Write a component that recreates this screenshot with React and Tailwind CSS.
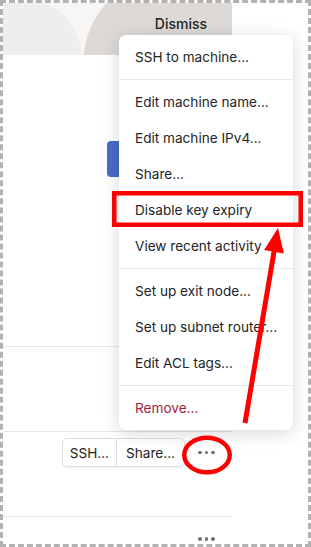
import React from "react";

function Dots() {
  return (
    <div className="flex items-center gap-[3px]">
      <span className="block w-[3.5px] h-[3.5px] rounded-full bg-[#727272]" />
      <span className="block w-[3.5px] h-[3.5px] rounded-full bg-[#727272]" />
      <span className="block w-[3.5px] h-[3.5px] rounded-full bg-[#727272]" />
    </div>
  );
}

const items = [
  ["SSH to machine..."],
  ["Edit machine name...", "Edit machine IPv4...", "Share...", "Disable key expiry", "View recent activity"],
  ["Set up exit node...", "Set up subnet router...", "Edit ACL tags..."],
];

export default function App() {
  return (
    <div
      className="relative w-[311px] h-[547px] overflow-hidden bg-white border-[3px] border-dashed border-[#b2b2b2] text-[#222]"
      style={{ fontFamily: "Inter, 'Noto Sans', sans-serif" }}
    >
      <div className="w-[229px] flex flex-col">
        {/* banner */}
        <div className="relative h-[52px] bg-[#f7f6f5] overflow-hidden flex justify-end items-start">
          <svg className="absolute inset-0" width="229" height="52" viewBox="0 0 229 52">
            <circle cx="17" cy="57" r="62" fill="#efeeec" />
            <circle cx="167" cy="59" r="86.5" fill="#dcd9d7" />
            <rect x="150" y="0" width="79" height="52" fill="#dcd9d7" />
          </svg>
          <span className="relative mt-[12px] mr-[25px] text-[14px] leading-[18px] font-medium text-[#242424]">
            Dismiss
          </span>
        </div>
        {/* section 1 */}
        <div className="h-[292px] border-b border-[#e6e6e6] pt-[86px] pl-[104px]">
          <div className="w-[70px] h-[36px] rounded-[4px] bg-[#4a6bcc]" />
        </div>
        {/* section 2 */}
        <div className="h-[85px] border-b border-[#e6e6e6]" />
        {/* section 3 */}
        <div className="h-[85px] border-b border-[#e6e6e6] flex justify-end items-start pt-[6px] pr-[4px]">
          <div className="flex items-stretch h-[29px]">
            <div className="flex border border-[#dedede] rounded-[5px] shadow-[0_1px_2px_rgba(0,0,0,0.06)] bg-white">
              <button className="px-[7px] text-[13.6px] leading-[18px] text-[#232323] border-r border-[#dedede]">SSH...</button>
              <button className="px-[9px] text-[13.6px] leading-[18px] text-[#232323]">Share...</button>
            </div>
            <div className="w-[43px] flex items-center justify-center">
              <Dots />
            </div>
          </div>
        </div>
        {/* section 4 */}
        <div className="flex justify-end pr-[4px] pt-[20px]">
          <div className="w-[43px] flex items-center justify-center">
            <Dots />
          </div>
        </div>
      </div>

      {/* dropdown menu */}
      <div className="absolute left-[116px] top-[32px] w-[174px] bg-white rounded-[7px] shadow-[0_3px_18px_rgba(0,0,0,0.16)] text-[13.6px] text-[#242424]">
        {items.map((group, gi) => (
          <div key={gi} className={"py-1" + (gi > 0 ? " border-t border-[#e8e8e8]" : "")}>
            {group.map((t) => (
              <div key={t} className="h-9 px-4 flex items-center whitespace-nowrap">
                {t}
              </div>
            ))}
          </div>
        ))}
        <div className="py-1 border-t border-[#e8e8e8]">
          <div className="h-9 px-4 flex items-center text-[#a3213e]">Remove...</div>
        </div>
      </div>

      {/* annotations */}
      <svg className="absolute left-0 top-0 pointer-events-none" width="305" height="541" viewBox="0 0 305 541">
        <rect x="111.25" y="190.25" width="186.5" height="31.5" fill="none" stroke="#ff0000" strokeWidth="4.5" />
        <line x1="242" y1="420" x2="271.5" y2="246" stroke="#ff0000" strokeWidth="5" />
        <polygon points="275,225 280.9,250.4 261.1,247" fill="#ff0000" />
        <ellipse cx="204" cy="452" rx="22.75" ry="17.25" fill="none" stroke="#ff0000" strokeWidth="4.5" />
      </svg>
    </div>
  );
}
